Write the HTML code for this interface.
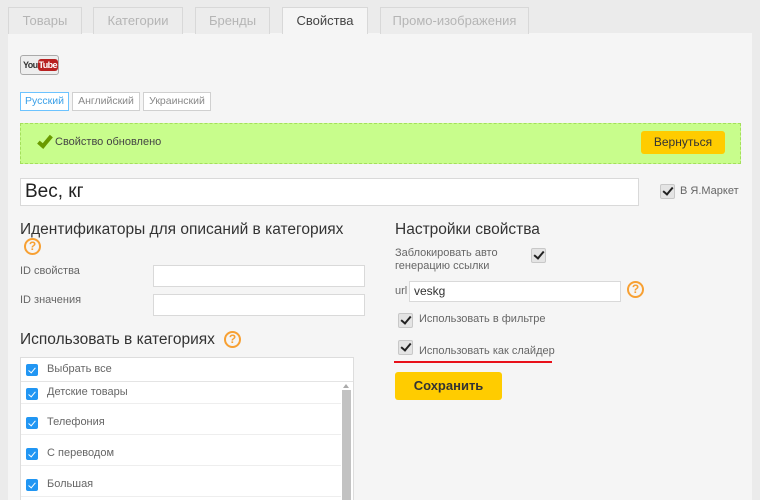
<!DOCTYPE html>
<html><head><meta charset="utf-8"><style>
*{box-sizing:border-box;margin:0;padding:0}
html,body{width:760px;height:500px;overflow:hidden}
body{background:#ebebeb;font-family:"Liberation Sans",sans-serif;color:#333;position:relative}
.a{position:absolute}
.tab{position:absolute;top:7px;height:27px;border:1px solid #d8d8d8;border-bottom:none;background:#ececec;color:#b5b5b5;font-size:13px;text-align:center;line-height:26px}
.tab.on{background:#f5f5f5;color:#444;height:27px}
.panel{position:absolute;left:8px;top:33px;width:744px;height:467px;background:#f5f5f5}
.inp{position:absolute;background:#fff;border:1px solid #d9d9d9}
.cb{position:absolute;width:15px;height:15px;background:#e4e4e4;border:1px solid #c8c8c8;border-radius:2px}
.cb:after{content:"";position:absolute;left:4px;top:0px;width:4px;height:8px;border:solid #222;border-width:0 2.5px 2.5px 0;transform:rotate(40deg)}
.bcb{position:absolute;left:5px;width:12px;height:12px;background:#2196f3;border-radius:2px}
.bcb:after{content:"";position:absolute;left:4px;top:2px;width:3px;height:6px;border:solid #fff;border-width:0 1.5px 1.5px 0;transform:rotate(40deg)}
.help{position:absolute;width:17px;height:17px;border:2px solid #f7a033;border-radius:50%;color:#f7a033;font-size:12px;font-weight:bold;text-align:center;line-height:13px}
.lbl{position:absolute;font-size:11px;color:#666}
h2{position:absolute;font-weight:normal;font-size:15.5px;color:#333;white-space:nowrap}
.row{position:absolute;left:0;width:320px;height:30px;border-bottom:1px solid #eee;font-size:11px;color:#666}
.row span{position:absolute;left:26px;top:7px}
</style></head><body>
<div class="panel"></div>
<div class="tab" style="left:8px;width:74px">Товары</div>
<div class="tab" style="left:93px;width:90px">Категории</div>
<div class="tab" style="left:195px;width:75px">Бренды</div>
<div class="tab on" style="left:282px;width:86px">Свойства</div>
<div class="tab" style="left:380px;width:149px">Промо-изображения</div>

<div class="a" style="left:20px;top:55px;width:39px;height:20px;border:1px solid #aaa;border-radius:3px;background:#eee;font-size:9px;font-weight:bold;line-height:18px;padding-left:2px;letter-spacing:-0.6px;white-space:nowrap">You<span style="background:#b82020;color:#fff;border-radius:3px;padding:1px 1px">Tube</span></div>

<div class="a" style="left:20px;top:92px;width:49px;height:19px;border:1px solid #6cc3ff;background:#fff;font-size:10.5px;color:#3aa0e8;line-height:17px;text-align:center">Русский</div>
<div class="a" style="left:72px;top:92px;width:68px;height:19px;border:1px solid #d0d0d0;background:#fff;font-size:10.5px;color:#888;line-height:17px;text-align:center">Английский</div>
<div class="a" style="left:143px;top:92px;width:68px;height:19px;border:1px solid #d0d0d0;background:#fff;font-size:10.5px;color:#888;line-height:17px;text-align:center">Украинский</div>

<div class="a" style="left:20px;top:123px;width:721px;height:41px;background:#c8fd8c;border:1px dashed #a4df5c"></div>
<div class="a" style="left:41px;top:133px;width:8px;height:15px;border:solid #6a9a00;border-width:0 4px 4px 0;transform:rotate(40deg)"></div>
<div class="a" style="left:55px;top:136px;font-size:11px;color:#444">Свойство обновлено</div>
<div class="a" style="left:641px;top:131px;width:84px;height:23px;background:#ffcc00;border-radius:3px;font-size:12px;color:#333;text-align:center;line-height:23px">Вернуться</div>

<div class="inp" style="left:20px;top:178px;width:619px;height:28px;font-size:19px;line-height:26px;padding-left:4px;color:#222">Вес, кг</div>
<div class="cb" style="left:660px;top:184px"></div>
<div class="a" style="left:680px;top:185px;font-size:11px;color:#666">В Я.Маркет</div>

<h2 style="left:20px;top:221px">Идентификаторы для описаний в категориях</h2>
<div class="help" style="left:24px;top:238px">?</div>
<div class="lbl" style="left:20px;top:265px">ID свойства</div>
<div class="inp" style="left:153px;top:265px;width:212px;height:22px"></div>
<div class="lbl" style="left:20px;top:294px">ID значения</div>
<div class="inp" style="left:153px;top:294px;width:212px;height:22px"></div>
<h2 style="left:20px;top:331px">Использовать в категориях</h2>
<div class="help" style="left:224px;top:331px">?</div>

<div class="a" style="left:20px;top:357px;width:334px;height:150px;background:#fff;border:1px solid #ddd">
 <div class="row" style="top:0;height:24px;width:332px;border-bottom:1px solid #e4e4e4"><div class="bcb" style="top:6px"></div><span style="top:5px">Выбрать все</span></div>
 <div class="row" style="top:24px;height:22px"><div class="bcb" style="top:6px"></div><span style="top:4px">Детские товары</span></div>
 <div class="row" style="top:46px;height:31px"><div class="bcb" style="top:13px"></div><span style="top:12px">Телефония</span></div>
 <div class="row" style="top:77px;height:31px"><div class="bcb" style="top:13px"></div><span style="top:12px">С переводом</span></div>
 <div class="row" style="top:108px;height:31px"><div class="bcb" style="top:13px"></div><span style="top:12px">Большая</span></div>
 <div class="a" style="left:321px;top:32px;width:9px;height:120px;background:#c2c2c2"></div>
 <div class="a" style="left:322px;top:26px;border:3px solid transparent;border-bottom:4px solid #aaa;border-top:none"></div>
</div>

<h2 style="left:395px;top:221px">Настройки свойства</h2>
<div class="lbl" style="left:395px;top:247px;line-height:13px">Заблокировать авто<br>генерацию ссылки</div>
<div class="cb" style="left:531px;top:248px"></div>
<div class="lbl" style="left:395px;top:285px">url</div>
<div class="inp" style="left:409px;top:281px;width:212px;height:21px;font-size:12px;padding-left:4px;line-height:19px;color:#333">veskg</div>
<div class="help" style="left:627px;top:281px">?</div>
<div class="cb" style="left:398px;top:313px"></div>
<div class="a" style="left:419px;top:313px;font-size:11px;color:#666">Использовать в фильтре</div>
<div class="cb" style="left:398px;top:340px"></div>
<div class="a" style="left:419px;top:345px;font-size:11px;color:#666">Использовать как слайдер</div>
<div class="a" style="left:394px;top:361px;width:158px;height:2px;background:#e8101a"></div>
<div class="a" style="left:395px;top:372px;width:107px;height:28px;background:#ffcc00;border-radius:3px;font-size:13px;font-weight:bold;color:#333;text-align:center;line-height:28px">Сохранить</div>
</body></html>
